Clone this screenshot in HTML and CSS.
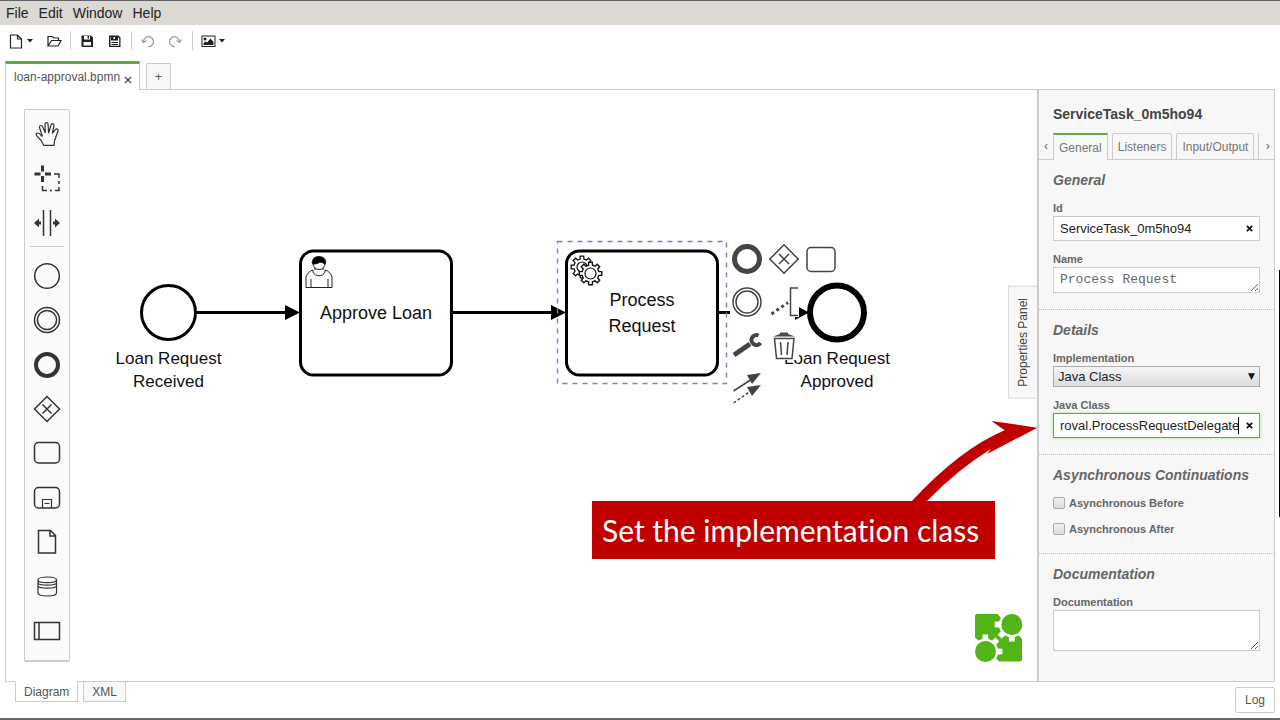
FILE: index.html
```html
<!DOCTYPE html>
<html lang="en">
<head>
<meta charset="utf-8">
<title>loan-approval.bpmn</title>
<link rel="stylesheet" href="styles.css">
</head>
<body>
<svg class="defs" aria-hidden="true">
  <symbol id="gear" viewBox="-11 -11 22 22" overflow="visible">
    <path d="M7.3-1.7L9.9-1.6 9.9 1.6 7.3 1.7 6.4 4 8.1 5.9 5.9 8.1 4 6.4 1.7 7.3 1.6 9.9-1.6 9.9-1.7 7.3-4 6.4-5.9 8.1-8.1 5.9-6.4 4-7.3 1.7-9.9 1.6-9.9-1.6-7.3-1.7-6.4-4-8.1-5.9-5.9-8.1-4-6.4-1.7-7.3-1.6-9.9 1.6-9.9 1.7-7.3 4-6.4 5.9-8.1 8.1-5.9 6.4-4z"/>
  </symbol>
  <symbol id="ring" viewBox="0 0 28 28"><circle cx="14" cy="14" r="12.3"/></symbol>
  <symbol id="double-ring" viewBox="0 0 28 28"><circle cx="14" cy="14" r="12.5"/><circle cx="14" cy="14" r="9.6"/></symbol>
  <symbol id="thick-ring" viewBox="0 0 28 28"><circle cx="14" cy="14" r="11" stroke-width="4"/></symbol>
  <symbol id="gateway" viewBox="0 0 28 28"><path d="M14 1.5L26.5 14 14 26.500 1.500 14zM9.500 9.500l9 9m0-9l-9 9"/></symbol>
  <symbol id="task" viewBox="0 0 28 28"><rect x="1.500" y="3.500" width="25" height="20.500" rx="4"/></symbol>
</svg>

<nav class="menubar">
  <button>File</button><button>Edit</button><button>Window</button><button>Help</button>
</nav>

<div class="toolbar">
  <button class="with-caret" aria-label="New diagram">
    <svg class="tool" viewBox="0 0 16 16"><path d="M2.500 2h7l4 4v9h-11zM9.500 2v4h4"/></svg>
    <svg class="caret" viewBox="0 0 8 8"><path d="M1 2h6l-3 3.500z"/></svg>
  </button>
  <button aria-label="Open diagram"><svg class="tool" viewBox="0 0 16 16"><path d="M2 13V3.500h4.500l1 1.500h5v2.500M2 13l3.500-5.500H15L12 13z"/></svg></button>
  <i class="divider"></i>
  <button aria-label="Save"><svg class="tool solid" viewBox="0 0 16 16"><path fill-rule="evenodd" d="M2.500 2.500h9.500l2 2v9.500h-11.500zM5 3v3.500h6V3zM4.500 9v3.500h7.500V9zM8.500 3h1.500v2.500h-1.500z"/></svg></button>
  <button aria-label="Save as"><svg class="tool solid" viewBox="0 0 16 16"><path fill-rule="evenodd" d="M2 2.500h9.500l2 2v9.500h-11.500zM3.500 4v8.800h8.700V5.500L11 4v3.500H4V4zM6.500 4v2h1.500V4zM4.500 9h6.500v1H4.500zM4.500 11h6.500v1H4.500z"/></svg></button>
  <i class="divider"></i>
  <button aria-label="Undo" disabled><svg class="tool" viewBox="0 0 16 16"><path d="M3.500 9a5 5 0 1 1 4.500 4.700M1.500 6.500l2 3 3-2"/></svg></button>
  <button aria-label="Redo" disabled><svg class="tool" viewBox="0 0 16 16"><path d="M11.500 9a5 5 0 1 0-4.500 4.700M13.500 6.500l-2 3-3-2"/></svg></button>
  <i class="divider"></i>
  <button class="with-caret" aria-label="Export image">
    <svg class="tool solid" viewBox="0 0 16 16"><path fill-rule="evenodd" d="M.5 2.500h14v11.500H.5zM1.500 3.500v9.500h12V3.500z"/><circle cx="4" cy="6" r="1.500"/><path d="M2.500 12v-2l2-1.500 1.500 1L9.500 5.500l3 3.500v3z"/></svg>
    <svg class="caret" viewBox="0 0 8 8"><path d="M0 2h6l-3 3.500z"/></svg>
  </button>
</div>

<div class="file-tabs">
  <div class="file-tab"><span>loan-approval.bpmn</span><button aria-label="Close tab"><svg viewBox="0 0 8 8"><path d="M1 1l6 6m0-6l-6 6"/></svg></button></div>
  <button class="new-tab">+</button>
</div>

<main class="workspace">
  <section class="canvas">
    <svg class="diagram" role="img" aria-label="Loan approval process">
      <g transform="translate(-6 -90)">
        <g class="shape">
          <circle cx="168.500" cy="312.500" r="27"/>
          <path d="M197 312.500h90M453 312.500h100M719 312.500h11"/>
          <rect x="300.500" y="251" width="151" height="124" rx="13"/>
          <rect x="566.500" y="251" width="151" height="124" rx="13"/>
          <circle class="end" cx="837" cy="312.500" r="27"/>
        </g>
        <path d="M285 305l15 7.500-15 7.500zM551 305l15 7.500-15 7.500zM795 305l14 7.500-14 7.500z"/>
        <rect class="selection" x="557.500" y="241.500" width="169" height="142"/>
        <g class="user">
          <path d="M313 270c-4 1-6 4-7 7v10.500h26V277c-1-3-3-6-7-7M313 270v2c2 5 10 5 12 0v-2M311 279v8m17-8v8M315 266v4m8-4v4"/>
          <circle cx="319" cy="263.500" r="6"/>
          <path class="hair" d="M312.500 264c-1-5 2-7.500 6.500-7.500s7.500 3 6.500 7.500c-2 0-4-3-7-1-2 1-4 1-6 1z"/>
        </g>
        <g class="gears">
          <use href="#gear" x="570" y="255" width="24" height="24"/>
          <circle cx="582" cy="267" r="5"/>
          <use href="#gear" x="578" y="261" width="25" height="25"/>
          <circle cx="590.500" cy="273.500" r="5.500"/>
        </g>
        <g class="caption">
          <text x="168.500" y="364">Loan Request</text>
          <text x="168.500" y="387">Received</text>
          <text x="837" y="364">Loan Request</text>
          <text x="837" y="387">Approved</text>
        </g>
        <g class="task-name">
          <text x="376" y="319">Approve Loan</text>
          <text x="642" y="306">Process</text>
          <text x="642" y="332">Request</text>
        </g>
      </g>
    </svg>

    <div class="palette">
      <button aria-label="Hand tool"><svg viewBox="0 0 28 28"><path stroke-width="1.200" d="M10.700 25.300L8.500 21 3.500 15.500Q2.700 13 5 13 6.500 13 8.500 16L9.300 16 6.500 7.500Q6.300 5.500 8 5.500 9.300 5.500 10 7.500L12.300 13 12 4.500Q12 2.700 13.500 2.700 15 2.700 15.100 4.500L15.600 13 18 5Q18.700 3.300 20 3.800 21.300 4.500 20.900 6L19.300 13.500 22.500 9.500Q23.800 8.300 24.800 9.300 25.400 10 24.800 11.500L21.500 21 21 25.300z"/></svg></button>
      <button aria-label="Lasso tool"><svg viewBox="0 0 28 28"><path stroke-width="3" d="M9.500 1.500v6m0 4.500v6M1.500 10h6m4.500 0h6"/><path d="M21 10h5v4m0 3v3m0 3v3.500h-4m-3 0h-2m-3 0H9.500V22"/></svg></button>
      <button aria-label="Space tool"><svg viewBox="0 0 28 28"><path d="M10.500 1v26M17.500 1v26"/><path class="fill" d="M1 14l5-4.500v3h2v3H6v3zM27 14l-5-4.500v3h-2v3h2v3z"/></svg></button>
      <hr>
      <button aria-label="Start event"><svg><use href="#ring"/></svg></button>
      <button aria-label="Intermediate event"><svg><use href="#double-ring"/></svg></button>
      <button aria-label="End event"><svg><use href="#thick-ring"/></svg></button>
      <button aria-label="Gateway"><svg><use href="#gateway"/></svg></button>
      <button aria-label="Task"><svg><use href="#task"/></svg></button>
      <button aria-label="Sub process"><svg viewBox="0 0 28 28"><rect x="1.500" y="3.500" width="25" height="20.500" rx="4"/><path stroke-width="1.200" d="M9.500 24v-8.500h9V24M11.500 19.500h5"/></svg></button>
      <button aria-label="Data object"><svg viewBox="0 0 28 28"><path d="M5.500 2.500h12l5 5v17.500h-17zM17 3v5h5"/></svg></button>
      <button aria-label="Data store"><svg viewBox="0 0 28 28"><path stroke-width="1.200" d="M5 8c0-4 18.500-4 18.500 0v13c0 4-18.500 4-18.500 0zc0 3.500 18.500 3.500 18.500 0M5 10.500c0 3.500 18.500 3.500 18.500 0M5 13.500c0 3.500 18.500 3.500 18.500 0"/></svg></button>
      <button aria-label="Pool"><svg viewBox="0 0 28 28"><path d="M1.500 5.500h25v17h-25zM6 5.500v17"/></svg></button>
    </div>

    <div class="context-pad">
      <button aria-label="Append end event"><svg viewBox="0 0 30 30"><circle cx="15" cy="15" r="12.500" stroke-width="5"/></svg></button>
      <button aria-label="Append gateway"><svg viewBox="0 0 30 30"><path d="M15 .8L29.200 15 15 29.200.8 15zM10 10l10 10m0-10L10 20"/></svg></button>
      <button aria-label="Append task"><svg viewBox="0 0 30 30"><rect x="1" y="3.500" width="28" height="24" rx="4"/></svg></button>
      <button aria-label="Append intermediate event"><svg viewBox="0 0 30 30"><circle cx="15" cy="15" r="14"/><circle cx="15" cy="15" r="11"/></svg></button>
      <button aria-label="Append annotation"><svg viewBox="0 0 30 30"><path d="M29 1h-7.500v27.500H29"/><path class="dots" d="M2.500 27L19 15.500"/></svg></button>
      <i></i>
      <button aria-label="Change type"><svg viewBox="0 0 30 30"><path stroke-width="5" d="M2 25L18 14"/><path stroke-width="4" d="M26.500 5.500A5 5 0 1 0 28.500 13"/></svg></button>
      <button aria-label="Remove"><svg viewBox="0 0 30 30"><path d="M5.500 8.500l2 20h15.500l2-20zM11.500 12l1 13M19 12l-1 13"/><path class="fill" d="M4 6.500L11 4V2.500h8V4l7 2.500z"/></svg></button>
      <i></i>
      <button aria-label="Connect"><svg viewBox="0 0 30 30"><path d="M1.500 18L20 6"/><path stroke-dasharray="3 2" d="M1.500 30L20 17"/><path class="fill" d="M15 2l14-2-9 11zM15 14l14-2-9 11z"/></svg></button>
    </div>

    <div class="note">
      <svg class="note-arrow" viewBox="0 0 127 81"><path d="M0 81Q49 28 93.700 9.300L80.300 0 126.500 6.700 76 33 80 28Q47 48 15 81z"/></svg>
      <p>Set the implementation class</p>
    </div>

    <svg class="logo" viewBox="0 0 48 48" aria-label="Camunda">
      <rect width="47" height="47.500" rx="2"/>
      <g class="cut"><use href="#gear" x="17.800" y="-8.500" width="38" height="38"/><use href="#gear" x="-8.700" y="18.500" width="38" height="38"/></g>
      <circle cx="36.800" cy="10.500" r="10.500"/><circle cx="10.500" cy="37.500" r="10.500"/>
    </svg>

    <button class="panel-toggle">Properties Panel</button>
  </section>

  <aside class="panel">
    <h1>ServiceTask_0m5ho94</h1>
    <div class="panel-tabs">
      <button class="arrow">‹</button>
      <button class="tab active">General</button>
      <button class="tab">Listeners</button>
      <button class="tab">Input/Output</button>
      <button class="arrow next">›</button>
    </div>
    <form>
      <section class="group">
        <h2>General</h2>
        <div class="entry"><label for="id">Id</label>
          <div class="field"><input id="id" type="text" value="ServiceTask_0m5ho94"><button type="button" aria-label="Clear id"><svg viewBox="0 0 8 8"><path d="M1 1l6 6m0-6l-6 6"/></svg></button></div></div>
        <div class="entry"><label for="name">Name</label><textarea id="name" rows="1">Process Request</textarea></div>
      </section>
      <section class="group">
        <h2>Details</h2>
        <div class="entry"><label for="impl">Implementation</label>
          <div class="select"><select id="impl"><option>Java Class</option></select></div></div>
        <div class="entry"><label for="class">Java Class</label>
          <div class="field focused"><input id="class" type="text" value="roval.ProcessRequestDelegate"><i class="cursor"></i><button type="button" aria-label="Clear class"><svg viewBox="0 0 8 8"><path d="M1 1l6 6m0-6l-6 6"/></svg></button></div></div>
      </section>
      <section class="group">
        <h2>Asynchronous Continuations</h2>
        <div class="check"><input id="before" type="checkbox"><label for="before">Asynchronous Before</label></div>
        <div class="check"><input id="after" type="checkbox"><label for="after">Asynchronous After</label></div>
      </section>
      <section class="group">
        <h2>Documentation</h2>
        <div class="entry"><label for="doc">Documentation</label><textarea id="doc" class="tall"></textarea></div>
      </section>
    </form>
  </aside>
</main>

<footer class="footer">
  <div class="views"><button class="active">Diagram</button><button>XML</button></div>
  <button class="log">Log</button>
</footer>
<div class="edge"></div>
</body>
</html>
```
FILE: styles.css
```css
* { box-sizing: border-box; }
body {
  margin: 0;
  min-height: 100vh;
  display: flex;
  flex-direction: column;
  position: relative;
  background: #fff;
  border-top: 1px solid #626266;
  border-bottom: 2px solid #68686c;
  font: 12px/16px "Liberation Sans", Arial, sans-serif;
  color: #555;
}
button { margin: 0; padding: 0; border: 0; background: none; font: inherit; color: inherit; }
svg { display: block; fill: none; stroke: #333; }
h1, h2, p { margin: 0; }
.defs { position: absolute; width: 0; height: 0; }
.fill { fill: #333; stroke: none; }

.menubar { display: flex; gap: 10px; padding: 0 6px; background: #dcd8d3; color: #222; font-size: 14px; line-height: 24px; }

.toolbar { display: flex; align-items: center; gap: 8px; height: 31px; padding: 0 8px; }
.toolbar button + button { margin-left: 4px; }
.with-caret { display: flex; align-items: center; gap: 2px; }
.tool { width: 16px; height: 16px; stroke: #222; stroke-width: 1.2px; }
.tool.solid, .caret { fill: #222; stroke: none; }
.caret { width: 8px; height: 8px; }
.toolbar button:disabled .tool { stroke: #999; }
.divider { width: 1px; height: 19px; background: #ccc; }

.file-tabs { display: flex; align-items: flex-end; gap: 6px; padding: 5px 5px 0; position: relative; z-index: 1; margin-bottom: -1px; }
.file-tab { display: flex; align-items: center; gap: 4px; height: 29px; padding: 0 7px 0 8px; border: 1px solid #ccc; border-top: 3px solid #65ab3c; border-bottom: 0; background: #fff; }
.file-tab svg { width: 8px; height: 8px; stroke: #444; stroke-width: 1.2px; margin-top: 5px; }
.new-tab { width: 25px; height: 27px; border: 1px solid #ccc; background: #f8f8f8; }

.workspace { flex: 1; display: flex; margin: 0 5px; border: 1px solid #ccc; }
.canvas { flex: 1; position: relative; min-width: 0; background: #fff; overflow: hidden; }
.diagram { position: absolute; width: 100%; height: 100%; fill: #000; stroke: none; }
.shape { fill: #fff; stroke: #000; stroke-width: 3px; }
.shape .end { stroke-width: 6px; }
.selection { fill: none; stroke: #7c7cd0; stroke-width: 1.4px; stroke-dasharray: 5 5; }
.user { fill: #fff; stroke: #222; stroke-width: 1px; }
.user .hair { fill: #000; }
.gears { fill: #fff; stroke: #111; stroke-width: 1.2px; }
.caption, .task-name { text-anchor: middle; fill: #111; font-size: 17px; }
.task-name { font-size: 18px; }

.palette { position: absolute; left: 18px; top: 19px; bottom: 19px; width: 46px; display: flex; flex-direction: column; padding: 2px 0 7px; background: #fafafa; border: 1px solid #ccc; border-bottom-width: 2px; border-radius: 2px; }
.palette button { flex: 1; display: flex; align-items: center; justify-content: center; }
.palette svg { width: 28px; height: 28px; stroke-width: 1.5px; }
.palette hr { width: 34px; margin: 1px auto 7px; border: 0; border-top: 1px solid #ccc; }

.context-pad { position: absolute; left: 726px; top: 154px; display: grid; grid-template-columns: repeat(3, 30px); grid-auto-rows: 30px; gap: 13px 7px; }
.context-pad button { background: #fff; }
.context-pad svg { width: 30px; height: 30px; stroke: #444; stroke-width: 1.5px; }
.context-pad .dots { stroke-width: 3px; stroke-dasharray: 3 3; }
.context-pad .fill { fill: #444; }

.note { position: absolute; left: 586px; top: 411px; }
.note p { padding: 0 16px 0 10px; background: #c00000; color: #fff; font: 30px/58px Lato, sans-serif; font-variant-ligatures: none; white-space: nowrap; }
.note-arrow { position: absolute; left: 319px; bottom: 57px; width: 127px; height: 81px; fill: #c00000; stroke: none; }

.logo { position: absolute; right: 14px; bottom: 19px; width: 48px; height: 48px; fill: #52b415; stroke: none; overflow: hidden; }
.cut { fill: #fff; }
.panel-toggle { position: absolute; right: 0; top: 196px; padding: 11px 6px; border: 1px solid #ddd; border-left: 0; background: #f8f8f8; writing-mode: vertical-rl; transform: rotate(180deg); color: #444; }

.panel { flex: 0 0 237px; min-width: 0; padding-top: 14px; border-left: 2px solid #ccc; background: #f7f7f7; color: #666; }
.panel h1 { padding: 0 14px; font-size: 14px; line-height: 20px; color: #444; }
.panel-tabs { display: flex; margin-top: 9px; border-bottom: 1px solid #ccc; }
.panel-tabs .tab { height: 26px; margin-right: 4px; padding: 0 5px; border: 1px solid #ccc; border-bottom: 0; border-radius: 2px 2px 0 0; color: #777; }
.panel-tabs .active { height: 27px; margin-bottom: -1px; border-top: 2px solid #65ab3c; border-radius: 0; background: #f7f7f7; }
.arrow { width: 14px; flex: none; }
.arrow.next { flex: 1; border-left: 1px solid #ccc; padding-left: 2px; }
.group { padding: 10px 14px 16px; }
.group + .group { border-top: 1px dotted #bbb; }
.group h2 { font-size: 14px; font-style: italic; line-height: 20px; }
.entry { display: flex; flex-direction: column; margin-top: 10px; }
.panel label { font-size: 11px; font-weight: bold; line-height: 16px; }
.field { display: flex; align-items: center; height: 25px; border: 1px solid #ccc; background: #fff; }
.field input { flex: 1; min-width: 0; padding: 0 0 0 6px; border: 0; outline: 0; background: none; font: 13px/16px "Liberation Sans", Arial, sans-serif; color: #222; }
.field button { width: 20px; display: flex; justify-content: center; }
.field svg { width: 7px; height: 7px; stroke: #111; stroke-width: 2px; }
.cursor { width: 1px; height: 17px; background: #000; }
.focused { border-color: #65ab3c; box-shadow: 0 0 3px #a8e080; }
textarea { height: 26px; margin: 0; padding: 4px 6px; border: 1px solid #ccc; border-radius: 0; background: #fff; font: 13px/16px "Liberation Mono", monospace; color: #666; }
textarea.tall { height: 41px; }
.select { position: relative; }
.select select { width: 100%; height: 21px; padding: 0 4px; appearance: none; border: 1px solid #aaa; border-radius: 0; background: linear-gradient(#f6f6f6, #dcdcdc); font: 13px/16px "Liberation Sans", Arial, sans-serif; color: #222; }
.select::after { content: "▼"; position: absolute; right: 5px; top: 2px; font: 9px/16px "DejaVu Sans", sans-serif; color: #111; pointer-events: none; }
.check { display: flex; align-items: center; gap: 4px; margin-top: 10px; }
.check input { width: 12px; height: 12px; margin: 0; appearance: none; border: 1px solid #aaa; border-radius: 2px; background: linear-gradient(#f0f0f0, #dcdcdc); }

.footer { display: flex; justify-content: space-between; height: 36px; padding: 0 5px 0 15px; }
.views { display: flex; align-items: flex-start; gap: 5px; }
.views button { height: 20px; padding: 0 8px; border: 1px solid #ccc; border-top: 0; background: #f8f8f8; }
.views .active { height: 21px; margin-top: -1px; border-top: 1px solid #fff; background: #fff; }
.log { align-self: flex-start; margin-top: 5px; height: 26px; padding: 0 9px; border: 1px solid #ccc; border-radius: 2px; }
.edge { position: absolute; right: 0; top: 269px; width: 1px; height: 247px; background: #000; }
```
